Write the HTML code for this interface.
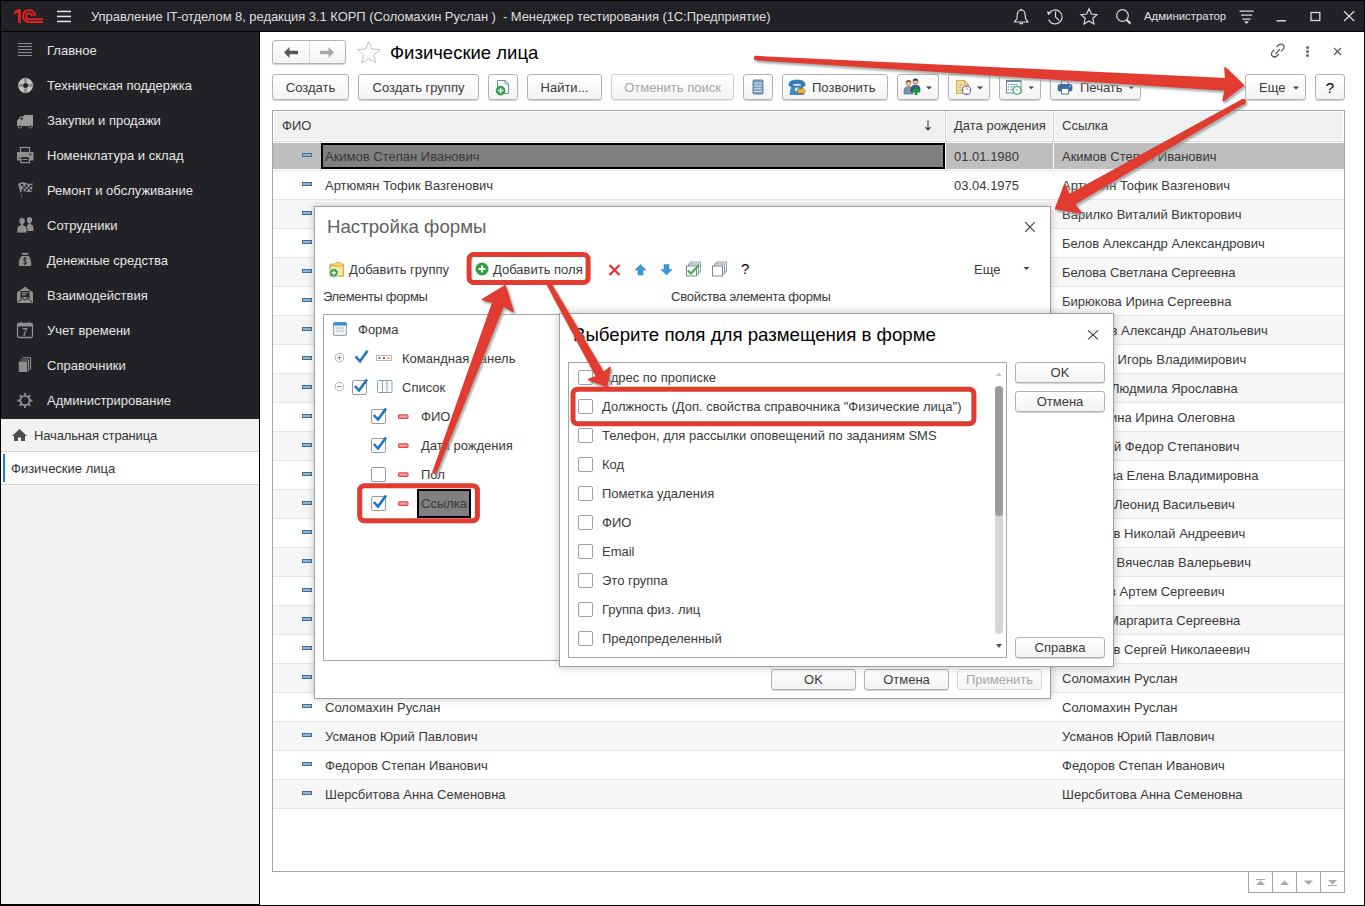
<!DOCTYPE html>
<html><head><meta charset="utf-8">
<style>
*{box-sizing:border-box}
html,body{margin:0;padding:0}
body{width:1365px;height:906px;position:relative;overflow:hidden;background:#000;font-family:"Liberation Sans",sans-serif;font-size:13px;color:#3a3a3a}
.a{position:absolute}
.t{position:absolute;white-space:pre;line-height:15px;color:#3a3a3a}
#titlebar{left:1px;top:1px;width:1363px;height:30px;background:#222226}
#side{left:1px;top:32px;width:258px;height:387px;background:#222226}
#side2{left:1px;top:419px;width:258px;height:485px;background:#f2f2f2}
#main{left:260px;top:32px;width:1104px;height:873px;background:#fff}
.sitem{position:absolute;left:47px;color:#e4e4e4;white-space:pre}
.btn{position:absolute;height:26px;border:1px solid #b3b3b3;border-radius:3px;background:linear-gradient(#fff,#f3f3f3);box-shadow:0 1px 1px rgba(0,0,0,.18);color:#3a3a3a;text-align:center;line-height:25px;white-space:pre}
.dis{color:#a6a6a6}
.row{position:absolute;left:273px;width:1071px;height:29px;border-bottom:1px solid #e3e3e3}
.cell{position:absolute;white-space:pre;line-height:15px;color:#333}
.mk{position:absolute;width:10px;height:4px;background:#88b8e0;border:1px solid #4a6c8c}
</style></head><body>
<div id="titlebar" class="a"></div>
<div id="side" class="a"></div>
<div id="side2" class="a"></div>
<div id="main" class="a"></div>
<!-- TABLE -->
<div class="a" style="left:272px;top:110px;width:1073px;height:762px;border:1px solid #a6a6a6;background:#fff"></div>
<div class="a" style="left:273px;top:111px;width:1071px;height:30px;background:#fff"></div>
<div class="a" style="left:274px;top:112px;width:670px;height:28px;background:#f1f1f1"></div>
<div class="a" style="left:947px;top:112px;width:105px;height:28px;background:#f1f1f1"></div>
<div class="a" style="left:1055px;top:112px;width:288px;height:28px;background:#f1f1f1"></div>
<div class="a" style="left:273px;top:141px;width:1071px;height:1px;background:#d6d6d6"></div>
<div class="a" style="left:945px;top:111px;width:1px;height:30px;background:#cfcfcf"></div>
<div class="a" style="left:1053px;top:111px;width:1px;height:30px;background:#cfcfcf"></div>
<div class="t" style="left:282px;top:118px">ФИО</div>
<div class="t" style="left:954px;top:118px">Дата рождения</div>
<div class="t" style="left:1062px;top:118px">Ссылка</div>
<svg class="a" style="left:922.5px;top:117px" width="10" height="16"><path d="M5 3.2 L5 12.8 M2.4 10.2 L5 12.9 L7.6 10.2" stroke="#383838" stroke-width="1.1" fill="none"/></svg>
<div class="a" style="left:273px;top:142px;width:1071px;height:28px;background:#fff"></div>
<div class="a" style="left:273px;top:170px;width:1071px;height:1px;background:#e6e6e6"></div>
<div class="a" style="left:273px;top:143px;width:1071px;height:26px;background:#bebebe"></div>
<div class="a" style="left:945px;top:142px;width:1px;height:28px;background:#fff"></div>
<div class="a" style="left:1053px;top:142px;width:1px;height:28px;background:#fff"></div>
<div class="a" style="left:321px;top:143px;width:624px;height:26px;background:#808080;border:2px solid #000"></div>
<div class="mk" style="left:302px;top:153px"></div>
<div class="t" style="left:325px;top:149px">Акимов Степан Иванович</div>
<div class="t" style="left:954px;top:149px">01.01.1980</div>
<div class="t" style="left:1062px;top:149px">Акимов Степан Иванович</div>
<div class="a" style="left:273px;top:171px;width:1071px;height:28px;background:#fff"></div>
<div class="a" style="left:273px;top:199px;width:1071px;height:1px;background:#e6e6e6"></div>
<div class="mk" style="left:302px;top:182px"></div>
<div class="t" style="left:325px;top:178px">Артюмян Тофик Вазгенович</div>
<div class="t" style="left:954px;top:178px">03.04.1975</div>
<div class="t" style="left:1062px;top:178px">Артюмян Тофик Вазгенович</div>
<div class="a" style="left:273px;top:200px;width:1071px;height:28px;background:#f7f7f7"></div>
<div class="a" style="left:273px;top:228px;width:1071px;height:1px;background:#e6e6e6"></div>
<div class="mk" style="left:302px;top:211px"></div>
<div class="t" style="left:325px;top:207px">Варилко Виталий Викторович</div>
<div class="t" style="left:1062px;top:207px">Варилко Виталий Викторович</div>
<div class="a" style="left:273px;top:229px;width:1071px;height:28px;background:#fff"></div>
<div class="a" style="left:273px;top:257px;width:1071px;height:1px;background:#e6e6e6"></div>
<div class="mk" style="left:302px;top:240px"></div>
<div class="t" style="left:325px;top:236px">Белов Александр Александрович</div>
<div class="t" style="left:1062px;top:236px">Белов Александр Александрович</div>
<div class="a" style="left:273px;top:258px;width:1071px;height:28px;background:#f7f7f7"></div>
<div class="a" style="left:273px;top:286px;width:1071px;height:1px;background:#e6e6e6"></div>
<div class="mk" style="left:302px;top:269px"></div>
<div class="t" style="left:325px;top:265px">Белова Светлана Сергеевна</div>
<div class="t" style="left:1062px;top:265px">Белова Светлана Сергеевна</div>
<div class="a" style="left:273px;top:287px;width:1071px;height:28px;background:#fff"></div>
<div class="a" style="left:273px;top:315px;width:1071px;height:1px;background:#e6e6e6"></div>
<div class="mk" style="left:302px;top:298px"></div>
<div class="t" style="left:325px;top:294px">Бирюкова Ирина Сергеевна</div>
<div class="t" style="left:1062px;top:294px">Бирюкова Ирина Сергеевна</div>
<div class="a" style="left:273px;top:316px;width:1071px;height:28px;background:#f7f7f7"></div>
<div class="a" style="left:273px;top:344px;width:1071px;height:1px;background:#e6e6e6"></div>
<div class="mk" style="left:302px;top:327px"></div>
<div class="t" style="left:325px;top:323px">Бобров Александр Анатольевич</div>
<div class="t" style="left:1110.5px;top:323px">в Александр Анатольевич</div>
<div class="a" style="left:273px;top:345px;width:1071px;height:28px;background:#fff"></div>
<div class="a" style="left:273px;top:373px;width:1071px;height:1px;background:#e6e6e6"></div>
<div class="mk" style="left:302px;top:356px"></div>
<div class="t" style="left:325px;top:352px">Волков Игорь Владимирович</div>
<div class="t" style="left:1114px;top:352px"> Игорь Владимирович</div>
<div class="a" style="left:273px;top:374px;width:1071px;height:28px;background:#f7f7f7"></div>
<div class="a" style="left:273px;top:402px;width:1071px;height:1px;background:#e6e6e6"></div>
<div class="mk" style="left:302px;top:385px"></div>
<div class="t" style="left:325px;top:381px">Гусева Людмила Ярославна</div>
<div class="t" style="left:1111px;top:381px">Людмила Ярославна</div>
<div class="a" style="left:273px;top:403px;width:1071px;height:28px;background:#fff"></div>
<div class="a" style="left:273px;top:431px;width:1071px;height:1px;background:#e6e6e6"></div>
<div class="mk" style="left:302px;top:414px"></div>
<div class="t" style="left:325px;top:410px">Дудкина Ирина Олеговна</div>
<div class="t" style="left:1110px;top:410px">ина Ирина Олеговна</div>
<div class="a" style="left:273px;top:432px;width:1071px;height:28px;background:#f7f7f7"></div>
<div class="a" style="left:273px;top:460px;width:1071px;height:1px;background:#e6e6e6"></div>
<div class="mk" style="left:302px;top:443px"></div>
<div class="t" style="left:325px;top:439px">Зорький Федор Степанович</div>
<div class="t" style="left:1114px;top:439px">й Федор Степанович</div>
<div class="a" style="left:273px;top:461px;width:1071px;height:28px;background:#fff"></div>
<div class="a" style="left:273px;top:489px;width:1071px;height:1px;background:#e6e6e6"></div>
<div class="mk" style="left:302px;top:472px"></div>
<div class="t" style="left:325px;top:468px">Иванова Елена Владимировна</div>
<div class="t" style="left:1109px;top:468px">ва Елена Владимировна</div>
<div class="a" style="left:273px;top:490px;width:1071px;height:28px;background:#f7f7f7"></div>
<div class="a" style="left:273px;top:518px;width:1071px;height:1px;background:#e6e6e6"></div>
<div class="mk" style="left:302px;top:501px"></div>
<div class="t" style="left:325px;top:497px">Козлов Леонид Васильевич</div>
<div class="t" style="left:1114px;top:497px">Леонид Васильевич</div>
<div class="a" style="left:273px;top:519px;width:1071px;height:28px;background:#fff"></div>
<div class="a" style="left:273px;top:547px;width:1071px;height:1px;background:#e6e6e6"></div>
<div class="mk" style="left:302px;top:530px"></div>
<div class="t" style="left:325px;top:526px">Лебедев Николай Андреевич</div>
<div class="t" style="left:1113.5px;top:526px">в Николай Андреевич</div>
<div class="a" style="left:273px;top:548px;width:1071px;height:28px;background:#f7f7f7"></div>
<div class="a" style="left:273px;top:576px;width:1071px;height:1px;background:#e6e6e6"></div>
<div class="mk" style="left:302px;top:559px"></div>
<div class="t" style="left:325px;top:555px">Морозов Вячеслав Валерьевич</div>
<div class="t" style="left:1113px;top:555px"> Вячеслав Валерьевич</div>
<div class="a" style="left:273px;top:577px;width:1071px;height:28px;background:#fff"></div>
<div class="a" style="left:273px;top:605px;width:1071px;height:1px;background:#e6e6e6"></div>
<div class="mk" style="left:302px;top:588px"></div>
<div class="t" style="left:325px;top:584px">Николаев Артем Сергеевич</div>
<div class="t" style="left:1109px;top:584px">в Артем Сергеевич</div>
<div class="a" style="left:273px;top:606px;width:1071px;height:28px;background:#f7f7f7"></div>
<div class="a" style="left:273px;top:634px;width:1071px;height:1px;background:#e6e6e6"></div>
<div class="mk" style="left:302px;top:617px"></div>
<div class="t" style="left:325px;top:613px">Орлова Маргарита Сергеевна</div>
<div class="t" style="left:1108px;top:613px">Маргарита Сергеевна</div>
<div class="a" style="left:273px;top:635px;width:1071px;height:28px;background:#fff"></div>
<div class="a" style="left:273px;top:663px;width:1071px;height:1px;background:#e6e6e6"></div>
<div class="mk" style="left:302px;top:646px"></div>
<div class="t" style="left:325px;top:642px">Петров Сергей Николаевич</div>
<div class="t" style="left:1113.5px;top:642px">в Сергей Николаеевич</div>
<div class="a" style="left:273px;top:664px;width:1071px;height:28px;background:#f7f7f7"></div>
<div class="a" style="left:273px;top:692px;width:1071px;height:1px;background:#e6e6e6"></div>
<div class="mk" style="left:302px;top:675px"></div>
<div class="t" style="left:325px;top:671px">Соломахин Руслан</div>
<div class="t" style="left:1062px;top:671px">Соломахин Руслан</div>
<div class="a" style="left:273px;top:693px;width:1071px;height:28px;background:#fff"></div>
<div class="a" style="left:273px;top:721px;width:1071px;height:1px;background:#e6e6e6"></div>
<div class="mk" style="left:302px;top:704px"></div>
<div class="t" style="left:325px;top:700px">Соломахин Руслан</div>
<div class="t" style="left:1062px;top:700px">Соломахин Руслан</div>
<div class="a" style="left:273px;top:722px;width:1071px;height:28px;background:#f7f7f7"></div>
<div class="a" style="left:273px;top:750px;width:1071px;height:1px;background:#e6e6e6"></div>
<div class="mk" style="left:302px;top:733px"></div>
<div class="t" style="left:325px;top:729px">Усманов Юрий Павлович</div>
<div class="t" style="left:1062px;top:729px">Усманов Юрий Павлович</div>
<div class="a" style="left:273px;top:751px;width:1071px;height:28px;background:#fff"></div>
<div class="a" style="left:273px;top:779px;width:1071px;height:1px;background:#e6e6e6"></div>
<div class="mk" style="left:302px;top:762px"></div>
<div class="t" style="left:325px;top:758px">Федоров Степан Иванович</div>
<div class="t" style="left:1062px;top:758px">Федоров Степан Иванович</div>
<div class="a" style="left:273px;top:780px;width:1071px;height:28px;background:#f7f7f7"></div>
<div class="a" style="left:273px;top:808px;width:1071px;height:1px;background:#e6e6e6"></div>
<div class="mk" style="left:302px;top:791px"></div>
<div class="t" style="left:325px;top:787px">Шерсбитова Анна Семеновна</div>
<div class="t" style="left:1062px;top:787px">Шерсбитова Анна Семеновна</div>
<div class="a" style="left:1248px;top:871px;width:97px;height:22px;border:1px solid #a6a6a6;background:#fff"></div>
<div class="a" style="left:1272px;top:871px;width:1px;height:22px;background:#a6a6a6"></div>
<div class="a" style="left:1296px;top:871px;width:1px;height:22px;background:#a6a6a6"></div>
<div class="a" style="left:1320px;top:871px;width:1px;height:22px;background:#a6a6a6"></div>
<svg class="a" style="left:1248px;top:871px" width="97" height="22" viewBox="1248 871 97 22" fill="#a8a8a8">
<rect x="1256" y="879" width="9" height="1"/><path d="M1256 885 L1265 885 L1260.5 880.5Z"/>
<path d="M1280 885 L1289 885 L1284.5 880.5Z"/>
<path d="M1304 880.5 L1313 880.5 L1308.5 885Z"/>
<rect x="1328" y="885" width="9" height="1"/><path d="M1328 880 L1337 880 L1332.5 884.5Z"/>
</svg>
<!-- MAIN TOP -->
<div class="btn" style="left:272px;top:40px;width:74px;height:24px"></div>
<div class="a" style="left:309px;top:41px;width:1px;height:22px;background:#d8d8d8"></div>
<svg class="a" style="left:280px;top:44px" width="60" height="16" viewBox="280 44 60 16">
<path d="M284 52.5 L289.5 47 L289.5 50.8 L298 50.8 L298 54.2 L289.5 54.2 L289.5 58Z" fill="#555"/>
<path d="M334 52.5 L328.5 47 L328.5 50.8 L320 50.8 L320 54.2 L328.5 54.2 L328.5 58Z" fill="#a8a8a8"/>
</svg>
<svg class="a" style="left:355px;top:39px" width="28" height="26" viewBox="355 39 28 26">
<path d="M368.7 41.5 L371.8 49 L380 49.6 L373.8 55 L375.7 63 L368.7 58.7 L361.7 63 L363.6 55 L357.4 49.6 L365.6 49Z" fill="none" stroke="#b9c2ca" stroke-width="1"/>
</svg>
<div class="t" style="left:390px;top:42px;font-size:18.5px;line-height:21px;color:#000">Физические лица</div>
<svg class="a" style="left:1265px;top:40px" width="85" height="24" viewBox="1265 40 85 24" fill="none" stroke="#555" stroke-width="1.2">
<path d="M1276.5 47 L1278.8 44.8 Q1281 43.2 1283.2 45 Q1285 47 1283.2 49.2 L1281 51.4"/>
<path d="M1279 53.8 L1276.8 56 Q1274.6 58 1272.3 56 Q1270.4 54 1272.3 51.8 L1274.5 49.6"/>
<path d="M1275.5 54 L1280 49.2"/>
<circle cx="1307.5" cy="47.4" r="1.5" fill="#666" stroke="none"/><circle cx="1307.5" cy="51.5" r="1.5" fill="#666" stroke="none"/><circle cx="1307.5" cy="55.6" r="1.5" fill="#666" stroke="none"/>
<path d="M1334 48 L1341 55 M1341 48 L1334 55" stroke-width="1.1"/>
</svg>
<!-- TOOLBAR -->
<div class="btn" style="left:272px;top:74px;width:77px">Создать</div>
<div class="btn" style="left:358px;top:74px;width:121px">Создать группу</div>
<div class="btn" style="left:488px;top:74px;width:30px"></div>
<div class="btn" style="left:527px;top:74px;width:75px">Найти...</div>
<div class="btn dis" style="left:611px;top:74px;width:123px;border-color:#cdcdcd;box-shadow:0 1px 1px rgba(0,0,0,.08)">Отменить поиск</div>
<div class="btn" style="left:743px;top:74px;width:30px"></div>
<div class="btn" style="left:782px;top:74px;width:106px;text-align:left;padding-left:29px">Позвонить</div>
<div class="btn" style="left:897px;top:74px;width:42px"></div>
<div class="btn" style="left:948px;top:74px;width:42px"></div>
<div class="btn" style="left:999px;top:74px;width:42px"></div>
<div class="btn" style="left:1050px;top:74px;width:91px;text-align:left;padding-left:29px">Печать</div>
<div class="btn" style="left:1245px;top:74px;width:61px;text-align:left;padding-left:13px">Еще</div>
<div class="btn" style="left:1315px;top:74px;width:30px;font-size:15px;color:#000">?</div>
<svg class="a" style="left:480px;top:74px" width="680" height="26" viewBox="480 74 680 26">
<path d="M497.5 80.5 L505 80.5 L508.5 84 L508.5 93.5 L497.5 93.5Z" fill="#fff" stroke="#7088a0" stroke-width="1"/><path d="M505 80.5 L505 84 L508.5 84" fill="none" stroke="#7088a0" stroke-width="0.8"/>
<circle cx="500.6" cy="90.6" r="4.4" fill="#2fa84a" stroke="#1d8a36" stroke-width="0.8"/><path d="M498 90.6 L503.2 90.6 M500.6 88 L500.6 93.2" stroke="#fff" stroke-width="1.5"/>
<rect x="753" y="80" width="10" height="14" rx="1" fill="#7da4c8" stroke="#587c9e"/>
<path d="M754 83.2 L762 83.2 M754 86 L762 86 M754 88.8 L762 88.8 M754 91.5 L762 91.5" stroke="#e6eef6" stroke-width="0.8"/>
<path d="M789 84.5 Q789 80 797 80 Q805 80 805 84.5 L805 86 L801.5 86 L801 84 Q797 83 793 84 L792.5 86 L789 86Z" fill="#2f7fc0" stroke="#1f5f95" stroke-width="0.6"/>
<path d="M791.5 86 L802.5 86 L804 94.5 L790 94.5Z" fill="#3a8ad0" stroke="#1f5f95" stroke-width="0.6"/>
<circle cx="797" cy="89.5" r="2.6" fill="#cfe6f8" stroke="#1f5f95" stroke-width="0.6"/>
<path d="M797.5 89 L801.5 89 L801.5 87 L805.5 91 L801.5 95 L801.5 93 L797.5 93Z" fill="#f5b335" stroke="#9a6a10" stroke-width="0.7"/>
<path d="M904 94 L904 90 Q904.5 86.5 908.5 86.5 Q912.5 86.5 913 90 L913 94Z" fill="#6f94b8" stroke="#4a6a8a" stroke-width="0.6"/>
<path d="M908.5 87 L909.3 89 L908.5 93.5 L907.7 89Z" fill="#e88a4a"/>
<circle cx="908.5" cy="83" r="2.6" fill="#f2c890" stroke="#7a4a20" stroke-width="0.5"/><path d="M905.9 82.5 Q906 80 908.5 80 Q911 80 911.1 82.5 Q909 81.5 905.9 82.5Z" fill="#8a4a1a"/>
<path d="M911 92 L911 88.5 Q911.5 85 915.5 85 Q919.5 85 920 88.5 L920 92Z" fill="#3a5a8a" stroke="#2a4068" stroke-width="0.6"/>
<circle cx="915.5" cy="81.5" r="2.6" fill="#f2c890" stroke="#3a3a5a" stroke-width="0.5"/><path d="M912.9 81 Q913 78.5 915.5 78.5 Q918 78.5 918.1 81 Q916 80 912.9 81Z" fill="#2a2a4a"/>
<path d="M912 91 L920 91 M916 87 L916 95" stroke="#1a9a3a" stroke-width="2.6"/>
<path d="M926 86.5 L932 86.5 L929 89.5Z" fill="#444"/>
<path d="M956.5 80.5 L964.5 80.5 L968.5 84.5 L968.5 93.5 L956.5 93.5Z" fill="#f3df98" stroke="#c9a24a" stroke-width="0.9"/><path d="M964.5 80.5 L964.5 84.5 L968.5 84.5" fill="none" stroke="#c9a24a" stroke-width="0.8"/>
<path d="M958.5 85 L962 85 M958.5 87.5 L961 87.5 M958.5 90 L961 90" stroke="#c9a860" stroke-width="0.8"/>
<circle cx="966.5" cy="90.3" r="4.3" fill="#fff" stroke="#4a80c0" stroke-width="1.1"/>
<circle cx="966.5" cy="86.8" r="0.7" fill="#e03030"/><circle cx="966.5" cy="93.8" r="0.7" fill="#e03030"/><circle cx="963" cy="90.3" r="0.7" fill="#e03030"/><circle cx="970" cy="90.3" r="0.7" fill="#e03030"/>
<path d="M966.5 90.3 L968 88" stroke="#4a80c0" stroke-width="0.7"/>
<path d="M977 86.5 L983 86.5 L980 89.5Z" fill="#444"/>
<rect x="1006.5" y="80.5" width="14.5" height="12.5" fill="#fff" stroke="#6a88a8" stroke-width="1"/><rect x="1006.5" y="80.5" width="14.5" height="1.6" fill="#6a88a8"/>
<path d="M1010 84.5 L1018 84.5 M1010 87 L1015 87 M1010 89.5 L1013.5 89.5" stroke="#7fb0e0" stroke-width="1"/>
<path d="M1008 84.5 L1009 84.5 M1008 87 L1009 87 M1008 89.5 L1009 89.5" stroke="#5a90d0" stroke-width="1"/>
<circle cx="1017" cy="90.3" r="4" fill="#fff" stroke="#4aa85a" stroke-width="1.3"/><path d="M1015.5 88.8 L1017.3 90.6" stroke="#4a7a5a" stroke-width="0.8"/>
<path d="M1028.5 86.5 L1034 86.5 L1031.25 89.3Z" fill="#444"/>
<path d="M1061.5 80.5 L1066.5 80.5 L1068.5 82.5 L1068.5 85 L1061.5 85Z" fill="#fff" stroke="#4a6a90" stroke-width="0.9"/>
<rect x="1058" y="84.5" width="14" height="6.5" rx="1.5" fill="#3a6aa8" stroke="#2a5088" stroke-width="0.6"/>
<rect x="1061.5" y="88.5" width="7" height="5.5" fill="#fff" stroke="#4a6a90" stroke-width="0.9"/>
<rect x="1069" y="86" width="1.5" height="1" fill="#cfe0f5"/>
<path d="M1128.5 86.5 L1134 86.5 L1131.25 89.3Z" fill="#444"/>
</svg>
<svg class="a" style="left:1288px;top:82px" width="14" height="10" viewBox="1288 82 14 10"><path d="M1293 86.5 L1299 86.5 L1296 89.5Z" fill="#444"/></svg>
<!-- DIALOG1 -->
<div class="a" style="left:314px;top:206px;width:737px;height:493px;background:#fff;border:1px solid #a0a0a0;box-shadow:0 0 8px rgba(0,0,0,.22)"></div>
<div class="t" style="left:327px;top:216px;font-size:18.67px;line-height:21px;color:#606060">Настройка формы</div>
<svg class="a" style="left:1020px;top:217px" width="20" height="20" viewBox="1020 217 20 20"><path d="M1025.2 222.2 L1034.8 231.8 M1034.8 222.2 L1025.2 231.8" stroke="#444" stroke-width="1.2"/></svg>
<svg class="a" style="left:325px;top:258px" width="430" height="24" viewBox="325 258 430 24">
<path d="M330 264 L335 264 L336.5 262.5 L340 262.5 L341.5 264 L343.5 264 L343.5 276 L330 276Z" fill="#f5d77a" stroke="#c9a040" stroke-width="0.8"/>
<rect x="330" y="266" width="13.5" height="10" fill="#fae39a" stroke="#c9a040" stroke-width="0.8"/>
<circle cx="333.8" cy="272.8" r="4.4" fill="#2ea043" stroke="#fff" stroke-width="0.8"/><path d="M331.4 272.8 L336.2 272.8 M333.8 270.4 L333.8 275.2" stroke="#fff" stroke-width="1.3"/>
<circle cx="482" cy="269" r="6.5" fill="#2ea043"/><path d="M478.5 269 L485.5 269 M482 265.5 L482 272.5" stroke="#fff" stroke-width="1.8"/>
<path d="M609.5 265 L619.5 275 M619.5 265 L609.5 275" stroke="#e03030" stroke-width="2.2"/>
<path d="M640.5 264.5 L646 270 L643 270 L643 275 L638 275 L638 270 L635 270Z" fill="#3a9ae0" stroke="#2a78c0" stroke-width="0.5"/>
<path d="M666.5 275 L672 269.5 L669 269.5 L669 264.5 L664 264.5 L664 269.5 L661 269.5Z" fill="#3a9ae0" stroke="#2a78c0" stroke-width="0.5"/>
<rect x="690.5" y="262" width="10" height="10" fill="#eef2f6" stroke="#8a9aaa" stroke-width="0.9"/><rect x="688.5" y="264" width="10" height="10" fill="#eef2f6" stroke="#8a9aaa" stroke-width="0.9"/><rect x="686.5" y="266" width="10" height="10" fill="#fff" stroke="#6a7a8a" stroke-width="0.9"/>
<path d="M687.8 270.5 L691 273.5 L699 265" stroke="#3cb043" stroke-width="2" fill="none"/>
<rect x="716.5" y="262" width="10" height="10" fill="#eef2f6" stroke="#8a9aaa" stroke-width="0.9"/><rect x="714.5" y="264" width="10" height="10" fill="#eef2f6" stroke="#8a9aaa" stroke-width="0.9"/><rect x="712.5" y="266" width="10" height="10" fill="#fff" stroke="#6a7a8a" stroke-width="0.9"/>
</svg>
<div class="t" style="left:349px;top:262px">Добавить группу</div>
<div class="t" style="left:493px;top:262px">Добавить поля</div>
<div class="t" style="left:741px;top:261px;font-size:15px;color:#000">?</div>
<div class="t" style="left:974px;top:262px">Еще</div>
<svg class="a" style="left:1020px;top:264px" width="14" height="10" viewBox="1020 264 14 10"><path d="M1023.5 267 L1029.5 267 L1026.5 270Z" fill="#444"/></svg>
<div class="t" style="left:323px;top:289px;letter-spacing:-0.35px">Элементы формы</div>
<div class="t" style="left:671px;top:289px;letter-spacing:-0.25px">Свойства элемента формы</div>
<div class="a" style="left:323px;top:314px;width:500px;height:347px;border:1px solid #a6a6a6;background:#fff"></div>
<svg class="a" style="left:325px;top:316px" width="180" height="200" viewBox="325 316 180 200">
<rect x="333.5" y="322.5" width="13" height="13" rx="1.5" fill="#f0f3f6" stroke="#7a8a9a" stroke-width="0.8"/><rect x="333.5" y="322.5" width="13" height="3" fill="#3a8ad8"/>
<path d="M335.5 328 L344.5 328" stroke="#8ab" stroke-width="1" stroke-dasharray="2 1"/><path d="M335.5 331 L340 331 M341 331 L344.5 331" stroke="#aab" stroke-width="0.8"/>
<circle cx="339.4" cy="357.6" r="4.3" fill="none" stroke="#a8a8a8" stroke-width="0.9"/><path d="M337 357.6 L341.8 357.6 M339.4 355.2 L339.4 360" stroke="#888" stroke-width="0.9"/>
<path d="M355.5 356.5 L360 361.3 L367.5 350.8" stroke="#1a73c8" stroke-width="2.5" fill="none"/>
<rect x="376.5" y="355.5" width="15" height="5" fill="#fff" stroke="#a0a8b0" stroke-width="0.8"/><rect x="378.3" y="357" width="2.2" height="2" fill="#5a8ac0"/><rect x="382.9" y="357" width="2.2" height="2" fill="#e04040"/><rect x="387.5" y="357" width="2.2" height="2" fill="#e0b030"/>
<circle cx="339.4" cy="386.6" r="4.3" fill="none" stroke="#a8a8a8" stroke-width="0.9"/><path d="M337 386.6 L341.8 386.6" stroke="#888" stroke-width="0.9"/>
<rect x="352.5" y="380.5" width="14" height="14" rx="1.5" fill="#fff" stroke="#9a9a9a"/><path d="M354.8 386 L359 390.5 L367 379.5" stroke="#1a73c8" stroke-width="2.5" fill="none"/>
<rect x="377.5" y="380.5" width="14.5" height="12" rx="1" fill="#fff" stroke="#8a9aaa"/><path d="M382.5 381 L382.5 392.5 M387 381 L387 392.5" stroke="#8a9aaa" stroke-width="0.9"/><path d="M379.5 384 L390 384 M379.5 386.5 L390 386.5 M379.5 389 L390 389" stroke="#b8c2cc" stroke-width="0.8" stroke-dasharray="1 1"/>
<rect x="371.5" y="409.5" width="14" height="14" rx="1.5" fill="#fff" stroke="#9a9a9a"/>
<path d="M373.8 415.0 L378 419.5 L386 408.5" stroke="#1a73c8" stroke-width="2.5" fill="none"/>
<rect x="398.5" y="414.9" width="9.5" height="3.4" rx="1" fill="#f3a8a8" stroke="#e04646" stroke-width="1.2"/>
<rect x="371.5" y="438.5" width="14" height="14" rx="1.5" fill="#fff" stroke="#9a9a9a"/>
<path d="M373.8 444.0 L378 448.5 L386 437.5" stroke="#1a73c8" stroke-width="2.5" fill="none"/>
<rect x="398.5" y="443.9" width="9.5" height="3.4" rx="1" fill="#f3a8a8" stroke="#e04646" stroke-width="1.2"/>
<rect x="371.5" y="467.5" width="14" height="14" rx="1.5" fill="#fff" stroke="#9a9a9a"/>
<rect x="398.5" y="472.9" width="9.5" height="3.4" rx="1" fill="#f3a8a8" stroke="#e04646" stroke-width="1.2"/>
<rect x="371.5" y="496.5" width="14" height="14" rx="1.5" fill="#fff" stroke="#9a9a9a"/>
<path d="M373.8 502.0 L378 506.5 L386 495.5" stroke="#1a73c8" stroke-width="2.5" fill="none"/>
<rect x="398.5" y="501.9" width="9.5" height="3.4" rx="1" fill="#f3a8a8" stroke="#e04646" stroke-width="1.2"/>
</svg>
<div class="t" style="left:358px;top:322px">Форма</div>
<div class="t" style="left:402px;top:351px">Командная панель</div>
<div class="t" style="left:402px;top:380px">Список</div>
<div class="t" style="left:421px;top:409px">ФИО</div>
<div class="t" style="left:421px;top:438px">Дата рождения</div>
<div class="t" style="left:421px;top:467px">Пол</div>
<div class="a" style="left:417px;top:489px;width:54px;height:29px;background:#808080;border:2px solid #000"></div>
<div class="t" style="left:421px;top:496px">Ссылка</div>
<div class="btn" style="left:771px;top:669px;width:85px;height:21px;line-height:20px">OK</div>
<div class="btn" style="left:864px;top:669px;width:85px;height:21px;line-height:20px">Отмена</div>
<div class="btn dis" style="left:957px;top:669px;width:85px;height:21px;line-height:20px;border-color:#d6d6d6;box-shadow:none">Применить</div>
<!-- DIALOG2 -->
<div class="a" style="left:559px;top:313px;width:555px;height:354px;background:#fff;border:1px solid #a0a0a0;box-shadow:0 0 9px rgba(0,0,0,.25)"></div>
<div class="t" style="left:573px;top:323.5px;font-size:18.67px;line-height:21px;color:#000">Выберите поля для размещения в форме</div>
<svg class="a" style="left:1082px;top:325px" width="20" height="20" viewBox="1082 325 20 20"><path d="M1088 330.4 L1098 339.4 M1098 330.4 L1088 339.4" stroke="#444" stroke-width="1.2"/></svg>
<div class="a" style="left:568px;top:362px;width:439px;height:296px;border:1px solid #a6a6a6;background:#fff"></div>
<div class="a" style="left:995px;top:386px;width:8px;height:248px;border-radius:4px;background:#d6d6d6"></div>
<div class="a" style="left:995px;top:386px;width:8px;height:130px;border-radius:4px;background:#9c9c9c"></div>
<svg class="a" style="left:990px;top:368px" width="16" height="285" viewBox="990 368 16 285"><path d="M996 376 L1002 376 L999 372.3Z" fill="#c8c8c8"/><path d="M996 644 L1002 644 L999 648Z" fill="#555"/></svg>
<div class="btn" style="left:1015px;top:362px;width:90px;height:21px;line-height:19px">OK</div>
<div class="btn" style="left:1015px;top:391px;width:90px;height:21px;line-height:19px">Отмена</div>
<div class="btn" style="left:1015px;top:637px;width:90px;height:21px;line-height:19px">Справка</div>
<div class="a" style="left:578px;top:370px;width:15px;height:15px;border:1px solid #a0a0a0;border-radius:2px;background:#fff"></div>
<div class="t" style="left:602px;top:370px">Адрес по прописке</div>
<div class="a" style="left:578px;top:399px;width:15px;height:15px;border:1px solid #a0a0a0;border-radius:2px;background:#fff"></div>
<div class="t" style="left:602px;top:399px">Должность (Доп. свойства справочника "Физические лица")</div>
<div class="a" style="left:578px;top:428px;width:15px;height:15px;border:1px solid #a0a0a0;border-radius:2px;background:#fff"></div>
<div class="t" style="left:602px;top:428px">Телефон, для рассылки оповещений по заданиям SMS</div>
<div class="a" style="left:578px;top:457px;width:15px;height:15px;border:1px solid #a0a0a0;border-radius:2px;background:#fff"></div>
<div class="t" style="left:602px;top:457px">Код</div>
<div class="a" style="left:578px;top:486px;width:15px;height:15px;border:1px solid #a0a0a0;border-radius:2px;background:#fff"></div>
<div class="t" style="left:602px;top:486px">Пометка удаления</div>
<div class="a" style="left:578px;top:515px;width:15px;height:15px;border:1px solid #a0a0a0;border-radius:2px;background:#fff"></div>
<div class="t" style="left:602px;top:515px">ФИО</div>
<div class="a" style="left:578px;top:544px;width:15px;height:15px;border:1px solid #a0a0a0;border-radius:2px;background:#fff"></div>
<div class="t" style="left:602px;top:544px">Email</div>
<div class="a" style="left:578px;top:573px;width:15px;height:15px;border:1px solid #a0a0a0;border-radius:2px;background:#fff"></div>
<div class="t" style="left:602px;top:573px">Это группа</div>
<div class="a" style="left:578px;top:602px;width:15px;height:15px;border:1px solid #a0a0a0;border-radius:2px;background:#fff"></div>
<div class="t" style="left:602px;top:602px">Группа физ. лиц</div>
<div class="a" style="left:578px;top:631px;width:15px;height:15px;border:1px solid #a0a0a0;border-radius:2px;background:#fff"></div>
<div class="t" style="left:602px;top:631px">Предопределенный</div>
<!-- SIDEBAR -->
<div class="sitem" style="top:43px;line-height:15px">Главное</div>
<div class="sitem" style="top:78px;line-height:15px">Техническая поддержка</div>
<div class="sitem" style="top:113px;line-height:15px">Закупки и продажи</div>
<div class="sitem" style="top:148px;line-height:15px">Номенклатура и склад</div>
<div class="sitem" style="top:183px;line-height:15px">Ремонт и обслуживание</div>
<div class="sitem" style="top:218px;line-height:15px">Сотрудники</div>
<div class="sitem" style="top:253px;line-height:15px">Денежные средства</div>
<div class="sitem" style="top:288px;line-height:15px">Взаимодействия</div>
<div class="sitem" style="top:323px;line-height:15px">Учет времени</div>
<div class="sitem" style="top:358px;line-height:15px">Справочники</div>
<div class="sitem" style="top:393px;line-height:15px">Администрирование</div>
<svg class="a" style="left:0;top:32px" width="60" height="390" viewBox="0 32 60 390">
<g fill="#8f8f8f">
<rect x="18" y="43" width="14" height="1"/><rect x="18" y="46" width="14" height="1"/><rect x="18" y="49" width="14" height="1"/><rect x="18" y="52" width="14" height="1"/><rect x="18" y="55" width="14" height="1"/>
</g>
<circle cx="25.6" cy="85.5" r="5" fill="none" stroke="#c4c4c4" stroke-width="5"/>
<path d="M25.6 77.8 L25.6 82.8 M25.6 88.2 L25.6 93.2 M17.9 85.5 L22.9 85.5 M28.3 85.5 L33.3 85.5" stroke="#8c8c8c" stroke-width="3"/>
<path d="M17 126 L17 121 L20.5 116.5 L24 116 L24 115 L33 115 L33 126Z" fill="#9a9a9a"/>
<path d="M19.5 119.2 L21.5 117.5 L23 117.5 L23 119.5Z" fill="#222226"/>
<circle cx="20" cy="126.5" r="1.6" fill="#222226" stroke="#9a9a9a" stroke-width="0.8"/><circle cx="30.5" cy="126.5" r="1.6" fill="#222226" stroke="#9a9a9a" stroke-width="0.8"/>
<rect x="20.5" y="147.5" width="9" height="5" fill="none" stroke="#8f8f8f" stroke-width="1.2"/>
<path d="M17 152 L33.5 152 L33.5 160.5 L30 160.5 L30 156 L20.5 156 L20.5 160.5 L17 160.5Z" fill="#8f8f8f"/>
<rect x="20.8" y="156.6" width="8.6" height="6" fill="none" stroke="#8f8f8f" stroke-width="1.2"/><rect x="22.5" y="159" width="5" height="1" fill="#8f8f8f"/>
<rect x="29.5" y="153.5" width="1.6" height="1.6" fill="#222226"/><rect x="18.3" y="157.5" width="1.2" height="1.2" fill="#222226"/>
<path d="M18 184 Q22 181 26 183 Q30 185 32.5 183 L32 191.5 Q29 193 25.5 191.5 Q22 190 20.5 192.5 L22.5 197.5 L21.8 197.8 L18 184Z" fill="#8f8f8f"/>
<g fill="#222226"><rect x="21" y="184" width="2.2" height="2.2"/><rect x="25.4" y="184.5" width="2.2" height="2.2"/><rect x="29.6" y="185" width="2" height="2"/><rect x="23.2" y="186.6" width="2.2" height="2.2"/><rect x="27.6" y="187" width="2" height="2"/><rect x="21.6" y="189" width="2" height="2"/><rect x="25.6" y="189.2" width="2" height="2"/><rect x="29.8" y="189" width="1.8" height="1.8"/></g>
<path d="M26.5 231 L26.5 227 Q27 224.5 29 223.8 Q26.8 222.5 26.8 220 Q27 217 29.5 217 Q32 217 32.2 220 Q32.2 222.5 30 223.8 Q33 224.5 33.5 227.5 L33.5 231Z" fill="#8f8f8f"/>
<path d="M17 233 L17 228.5 Q17.5 225.5 21 224.8 Q18.8 223.2 18.8 220.5 Q19 217.6 22 217.6 Q25 217.6 25.2 220.5 Q25.2 223.2 23 224.8 Q26.5 225.5 27 228.5 L27 233Z" fill="#8f8f8f" stroke="#222226" stroke-width="0.8"/>
<rect x="22" y="252.8" width="6.2" height="2" fill="#8f8f8f"/>
<path d="M21.5 256 L28.8 256 Q31.2 259 31.2 263 L31.2 265 Q31.2 266 30 266 L20 266 Q18.8 266 18.8 265 L18.8 263 Q18.8 259 21.5 256Z" fill="#8f8f8f"/>
<path d="M26.6 258.6 Q25 257.6 23.8 258.6 Q22.8 259.8 24.5 260.8 L25.8 261.4 Q27.2 262.3 26.2 263.5 Q25 264.4 23.4 263.4 M25 257 L25 265" stroke="#222226" stroke-width="1" fill="none"/>
<path d="M17 292.5 L25 286.8 L33 292.5 L33 302.5 Q33 303 32.5 303 L17.5 303 Q17 303 17 302.5Z" fill="#8f8f8f"/>
<rect x="20.5" y="291" width="9" height="6" fill="#222226"/><rect x="21.8" y="292.2" width="6.4" height="1.2" fill="#8f8f8f"/><rect x="21.8" y="294.2" width="4.2" height="1.2" fill="#8f8f8f"/>
<path d="M17.8 302.2 L23.5 297.5 M32.2 302.2 L26.5 297.5 M20 297 L25 300 L30 297" stroke="#222226" stroke-width="0.9" fill="none"/>
<rect x="17.5" y="323.5" width="15" height="14" rx="1.5" fill="none" stroke="#8f8f8f" stroke-width="1.3"/><rect x="17.5" y="323.5" width="15" height="3" fill="#8f8f8f"/>
<path d="M21 321.5 L21 324.5 M29 321.5 L29 324.5" stroke="#8f8f8f" stroke-width="1" />
<text x="22" y="335.8" font-size="10" font-weight="bold" fill="#8f8f8f" font-family="Liberation Sans">7</text>
<rect x="18.8" y="361.5" width="8.4" height="10.5" fill="#8f8f8f"/>
<path d="M28.6 360 L28.6 371 M20.5 360 L28.6 360 M30.6 357.8 L30.6 369.5 M22.5 357.8 L30.6 357.8" stroke="#8f8f8f" stroke-width="1.1" fill="none"/>
<g stroke="#8f8f8f" stroke-width="1.8"><path d="M25 393 L25 408 M17.5 400.5 L32.5 400.5 M19.7 395.2 L30.3 405.8 M30.3 395.2 L19.7 405.8"/></g>
<circle cx="25" cy="400.5" r="4.6" fill="#222226" stroke="#8f8f8f" stroke-width="1.8"/>
</svg>
<div class="a" style="left:1px;top:451px;width:258px;height:1px;background:#d5d5d5"></div>
<div class="a" style="left:1px;top:452px;width:258px;height:32px;background:#fff"></div>
<div class="a" style="left:1px;top:484px;width:258px;height:1px;background:#d5d5d5"></div>
<div class="a" style="left:3px;top:454px;width:2px;height:28px;background:#1a7fd4"></div>
<svg class="a" style="left:10px;top:426px" width="20" height="18" viewBox="10 426 20 18"><path d="M12 436 L19.5 429 L27 436 L25 436 L25 441 L21 441 L21 437.5 L18 437.5 L18 441 L14 441 L14 436Z" fill="#4d4d4d"/></svg>
<div class="t" style="left:34px;top:428px;color:#333;letter-spacing:-0.15px">Начальная страница</div>
<div class="t" style="left:11px;top:461px;color:#333">Физические лица</div>
<div class="a" style="left:259px;top:32px;width:1px;height:874px;background:#000"></div>
<!-- TITLEBAR -->
<svg class="a" style="left:0;top:0" width="80" height="30" viewBox="0 0 80 30">
<path d="M13.8 12.2 L18 9 L20.8 9 L20.8 23.1 L18 23.1 L18 12.6 L13.8 14.4Z" fill="#e3201e"/>
<path d="M29 22 A6.05 6.05 0 1 1 35.05 15.95" stroke="#e3201e" stroke-width="2" fill="none"/>
<path d="M28.8 22 L43 22" stroke="#e3201e" stroke-width="2" fill="none"/>
<path d="M29 19.2 A3 3 0 1 1 32 16.2" stroke="#e3201e" stroke-width="2" fill="none"/>
<path d="M28.8 19.2 L43 19.2" stroke="#e3201e" stroke-width="1.8" fill="none"/>
<rect x="57" y="10.7" width="14" height="1.5" fill="#e6e6e6"/>
<rect x="57" y="15.7" width="14" height="1.5" fill="#e6e6e6"/>
<rect x="57" y="20.7" width="14" height="1.5" fill="#e6e6e6"/>
</svg>
<div class="t" style="left:91px;top:9px;color:#dedede;letter-spacing:-0.06px">Управление IT-отделом 8, редакция 3.1 КОРП (Соломахин Руслан )  - Менеджер тестирования (1С:Предприятие)</div>
<svg class="a" style="left:1000px;top:0" width="365" height="30" viewBox="1000 0 365 30" fill="none" stroke="#d8d8d8" stroke-width="1.2">
<path d="M1014.5 22 L1028 22 L1025.5 18.5 L1025 14 Q1024.5 10 1021.2 10 Q1018 10 1017.4 14 L1017 18.5Z"/>
<path d="M1019.5 23.5 L1023 23.5" stroke-width="1.5"/>
<circle cx="1021.2" cy="9.6" r="0.9" fill="#d8d8d8" stroke="none"/>
<path d="M1049.2 13.2 A7 7 0 1 1 1048.6 19.5"/>
<path d="M1047 11.5 L1051.5 12.2 L1048.2 15.4Z" fill="#d8d8d8" stroke="none"/>
<path d="M1055.5 11.5 L1055.5 17 L1059 20.4"/>
<path d="M1089 8.8 L1091.4 14 L1097 14.6 L1092.8 18.3 L1094 24 L1089 21 L1084 24 L1085.2 18.3 L1081 14.6 L1086.6 14Z"/>
<circle cx="1122.5" cy="15.5" r="5.8"/>
<path d="M1126.5 19.8 L1130.5 23.6" stroke-width="2.2"/>
<path d="M1239.5 11.2 L1253.5 11.2 M1241 15.2 L1252 15.2 M1242.5 19.2 L1250.5 19.2" stroke-width="1.3"/>
<path d="M1244 21.3 L1249 21.3 L1246.5 24Z" fill="#d8d8d8" stroke="none"/>
<path d="M1276.5 20.8 L1286 20.8" stroke-width="1.5"/>
<rect x="1311" y="12.5" width="8.8" height="8" stroke-width="1.3"/>
<path d="M1344 11.2 L1354.2 21 M1354.2 11.2 L1344 21" stroke-width="1.3"/>
</svg>
<div class="t" style="left:1144px;top:8.5px;color:#e0e0e0;font-size:11.4px">Администратор</div>
<div class="a" style="left:0;top:31px;width:1365px;height:1px;background:#000"></div>
<!-- ARROWS -->
<svg class="a" style="left:0;top:0" width="1365" height="906" viewBox="0 0 1365 906">
<defs><filter id="bl" x="-5%" y="-5%" width="110%" height="110%"><feGaussianBlur stdDeviation="0.8"/></filter></defs>
<g fill="#8f9a9a" fill-opacity=".45" stroke="none" transform="translate(1.6,2)" filter="url(#bl)">
<path d="M755.93,59.35 L1225.43,89.73 L1223.33,100.43 L1243.00,85.30 L1225.13,68.08 L1226.03,78.94 L756.07,56.85Z" stroke="#8f9a9a" stroke-width="2" stroke-linejoin="round"/>
<path d="M1242.76,100.00 L1068.83,195.01 L1064.90,185.11 L1055.80,208.50 L1080.57,212.55 L1074.03,204.13 L1244.24,102.60Z" stroke="#8f9a9a" stroke-width="2" stroke-linejoin="round"/>
<path d="M435.97,471.94 L503.19,305.63 L512.71,310.84 L505.00,286.00 L482.78,299.51 L493.36,301.91 L433.63,471.06Z" stroke="#8f9a9a" stroke-width="2" stroke-linejoin="round"/>
<path d="M547.58,284.49 L596.94,376.70 L589.02,379.45 L606.50,386.00 L609.92,367.65 L603.47,373.01 L550.02,283.11Z" stroke="#8f9a9a" stroke-width="2" stroke-linejoin="round"/>
<circle cx="756" cy="58.1" r="2.25"/>
<circle cx="1243.5" cy="101.3" r="2.5"/>
<circle cx="434.8" cy="471.5" r="2.25"/>
<circle cx="548.8" cy="283.8" r="2.4"/>
</g>
<g fill="#e23b2f" stroke="#e23b2f" stroke-width="2" stroke-linejoin="round">
<path d="M755.93,59.35 L1225.43,89.73 L1223.33,100.43 L1243.00,85.30 L1225.13,68.08 L1226.03,78.94 L756.07,56.85Z"/>
<path d="M1242.76,100.00 L1068.83,195.01 L1064.90,185.11 L1055.80,208.50 L1080.57,212.55 L1074.03,204.13 L1244.24,102.60Z"/>
<path d="M435.97,471.94 L503.19,305.63 L512.71,310.84 L505.00,286.00 L482.78,299.51 L493.36,301.91 L433.63,471.06Z"/>
<path d="M547.58,284.49 L596.94,376.70 L589.02,379.45 L606.50,386.00 L609.92,367.65 L603.47,373.01 L550.02,283.11Z"/>
<circle cx="756" cy="58.1" r="2.25" stroke="none"/>
<circle cx="1243.5" cy="101.3" r="2.5" stroke="none"/>
<circle cx="434.8" cy="471.5" r="2.25" stroke="none"/>
<circle cx="548.8" cy="283.8" r="2.4" stroke="none"/>
</g>
<g fill="none" stroke="#e23b2f" stroke-width="5">
<rect x="469.1" y="254.6" width="119" height="27.9" rx="4.5"/>
<rect x="573" y="389.3" width="400.9" height="34.4" rx="4.5"/>
<rect x="359.7" y="485.7" width="117.7" height="35" rx="4.5"/>
</g>
</svg>
<!-- /ARROWS -->
</body></html>
